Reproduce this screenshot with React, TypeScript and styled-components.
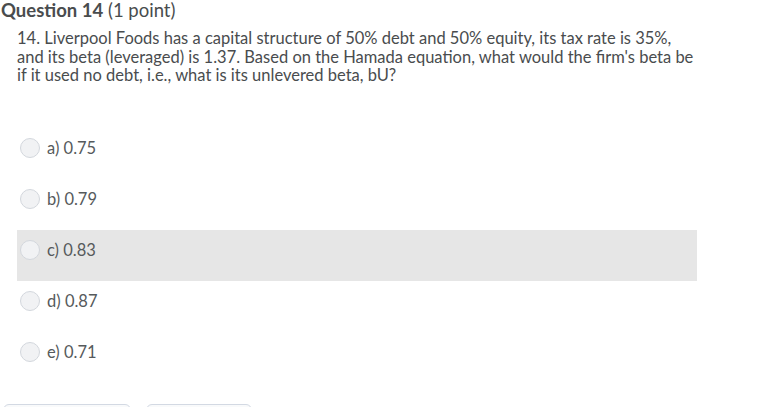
import React from "react";
import styled, { createGlobalStyle } from "styled-components";

interface IOption {
  label: string;
  value: string;
}

interface IRowProps {
  highlighted?: boolean;
}

const options: IOption[] = [
  { label: "a)", value: "0.75" },
  { label: "b)", value: "0.79" },
  { label: "c)", value: "0.83" },
  { label: "d)", value: "0.87" },
  { label: "e)", value: "0.71" }
];

const GlobalStyle = createGlobalStyle`
  html, body {
    margin: 0;
    padding: 0;
    background: #ffffff;
    overflow: hidden;
  }
  body {
    font-family: Lato, "Open Sans", sans-serif;
    color: #494c4e;
  }
`;

const App: React.FC = () => {
  return (
    <>
      <GlobalStyle />
      <Page>
        <Title>
          <strong>Question 14</strong> (1 point)
        </Title>
        <Body>
          <Prompt>
            14. Liverpool Foods has a capital structure of 50% debt and 50%
            equity, its tax rate is 35%, and its beta (leveraged) is 1.37.
            Based on the Hamada equation, what would the firm's beta be if it
            used no debt, i.e., what is its unlevered beta, bU?
          </Prompt>
          <OptionList>
            {options.map(o => (
              <OptionRow key={o.label} highlighted={o.label === "c)"}>
                <Radio />
                <OptionText>
                  {o.label} {o.value}
                </OptionText>
              </OptionRow>
            ))}
          </OptionList>
        </Body>
        <Buttons>
          <NavButton width={128} />
          <NavButton width={106} />
        </Buttons>
      </Page>
    </>
  );
};

const Page = styled.div({
  display: "flex",
  flexDirection: "column",
  padding: "0 0 0 1px"
});

const Title = styled.h2({
  margin: 0,
  fontSize: "18.5px",
  lineHeight: "20px",
  fontWeight: 400,
  color: "#494c4e",
  strong: {
    fontWeight: 700
  }
});

const Body = styled.div({
  display: "flex",
  flexDirection: "column",
  width: "680px",
  marginLeft: "16px"
});

const Prompt = styled.p({
  margin: "9px 0 0 0",
  fontSize: "16.5px",
  lineHeight: "18.5px",
  color: "#494c4e"
});

const OptionList = styled.div({
  display: "flex",
  flexDirection: "column",
  marginTop: "43px"
});

const OptionRow = styled.div<IRowProps>(props => ({
  display: "flex",
  alignItems: "flex-start",
  gap: "7px",
  height: "51px",
  boxSizing: "border-box",
  padding: "10px 0 0 3px",
  backgroundColor: props.highlighted ? "#e6e6e6" : "transparent"
}));

const Radio = styled.span({
  width: "20px",
  height: "20px",
  boxSizing: "border-box",
  borderRadius: "50%",
  border: "1px solid #d3d7dd",
  backgroundColor: "#f1f2f4",
  flexShrink: 0
});

const OptionText = styled.span({
  fontSize: "16.5px",
  lineHeight: "20px",
  color: "#565a5c"
});

const Buttons = styled.div({
  display: "flex",
  gap: "15px",
  marginTop: "21px",
  paddingLeft: "2px"
});

const NavButton = styled.div<{ width: number }>(props => ({
  width: `${props.width}px`,
  height: "36px",
  boxSizing: "border-box",
  border: "1px solid #d3d9e3",
  borderRadius: "6px",
  backgroundColor: "#f9fafb"
}));

export default App;
